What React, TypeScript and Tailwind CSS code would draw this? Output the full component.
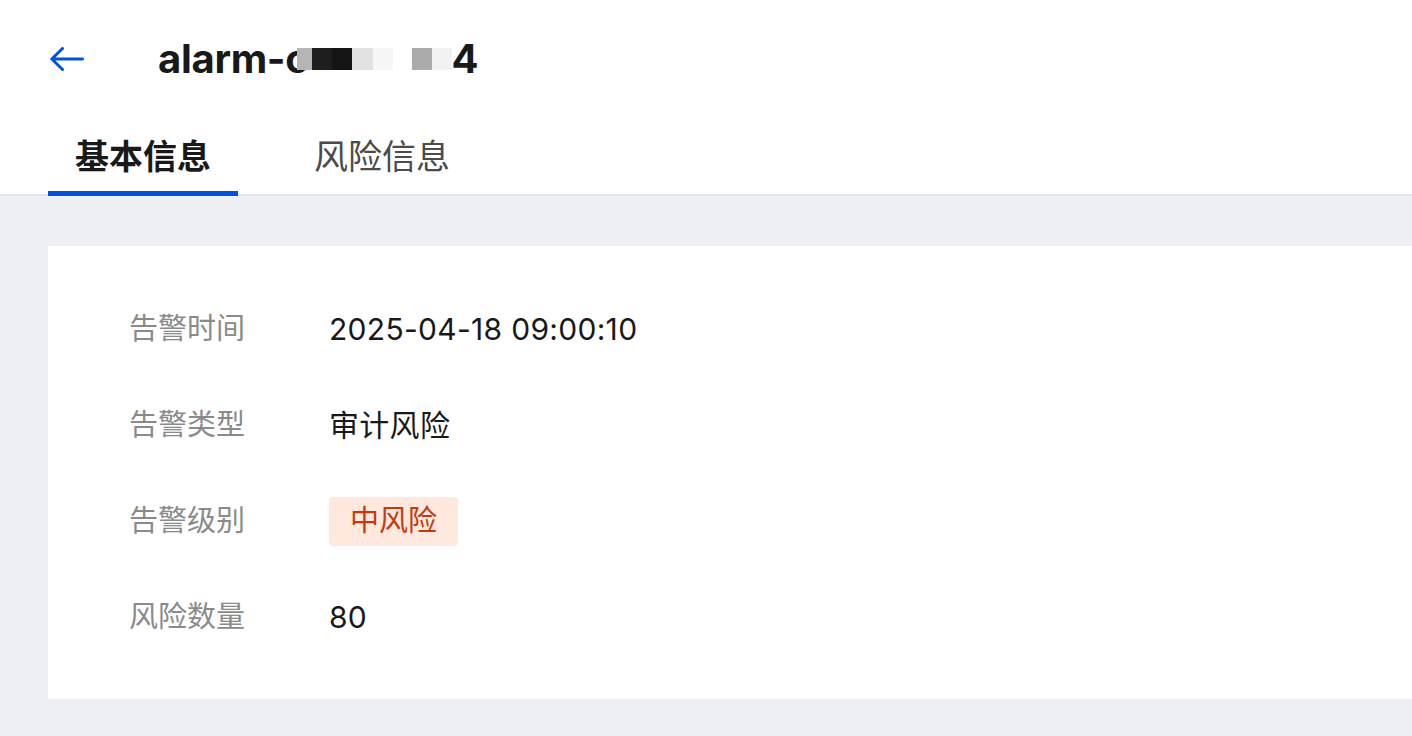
const rows = [
  { label: "告警时间", value: "2025-04-18 09:00:10" },
  { label: "告警类型", value: "审计风险" },
  { label: "告警级别", value: "中风险", badge: true },
  { label: "风险数量", value: "80" },
];

// pixelated redaction blocks in the title
const blocks = [
  "bg-[#b5b5b5] w-[15px]",
  "bg-[#1e1e1e] w-[20px]",
  "bg-[#141414] w-[20px]",
  "bg-[#e2e2e2] w-[21px]",
  "bg-[#f7f7f7] w-[20px]",
  "bg-white w-[19px]",
  "bg-[#ababab] w-[20px]",
  "bg-[#f2f2f2] w-[20px]",
];

export default function App() {
  return (
    <div
      className="min-h-[736px] bg-[#eff0f5] text-[#191919]"
      style={{ fontFamily: 'Inter, "Noto Sans CJK SC", sans-serif' }}
    >
      <div className="bg-white border-b-2 border-[#e3e5ec]">
        <div className="flex items-center h-[118px] pl-[50px]">
          <button className="w-[34px] flex items-center">
            <svg width="34" height="24" viewBox="0 0 34 24" fill="none" stroke="#0052d9" strokeWidth="3" strokeLinecap="round" strokeLinejoin="round">
              <path d="M12.5 1.5 1.8 12l10.7 10.5M2 12h30.5" />
            </svg>
          </button>
          <h1 className="ml-[74px] text-[40px] font-bold tracking-[-0.3px] flex items-center leading-none">
            <span>alarm-c</span>
            <span className="flex items-center h-[22px] -ml-[12px]">
              {blocks.map((b, i) => (
                <span key={i} className={`h-[22px] ${b}`} />
              ))}
            </span>
            <span>4</span>
          </h1>
        </div>
        <div className="flex pl-[48px] h-[78px] -mb-[2px]">
          <div className="px-[27px] flex items-center text-[34px] font-bold border-b-[5px] border-[#0052d9] leading-none pt-[4px]">
            基本信息
          </div>
          <div className="ml-[49px] px-[27px] flex items-center text-[34px] text-[#4b4b4b] border-b-[5px] border-transparent leading-none pt-[4px]">
            风险信息
          </div>
        </div>
      </div>

      <div className="pt-[50px] pl-[48px]">
        <div className="bg-white pl-[81px] pt-[59px] pb-[58px] flex flex-col gap-[48px]">
          {rows.map((r) => (
            <div key={r.label} className="flex items-center h-[48px]">
              <div className="w-[200px] text-[29px] text-[#8a8a8a]">{r.label}</div>
              {r.badge ? (
                <span className="h-[49px] px-[21px] flex items-center rounded-[4px] bg-[#ffe9de] text-[#c7380d] text-[29px]">
                  {r.value}
                </span>
              ) : (
                <div className="text-[30px] tracking-[0.3px]">{r.value}</div>
              )}
            </div>
          ))}
        </div>
      </div>
    </div>
  );
}
